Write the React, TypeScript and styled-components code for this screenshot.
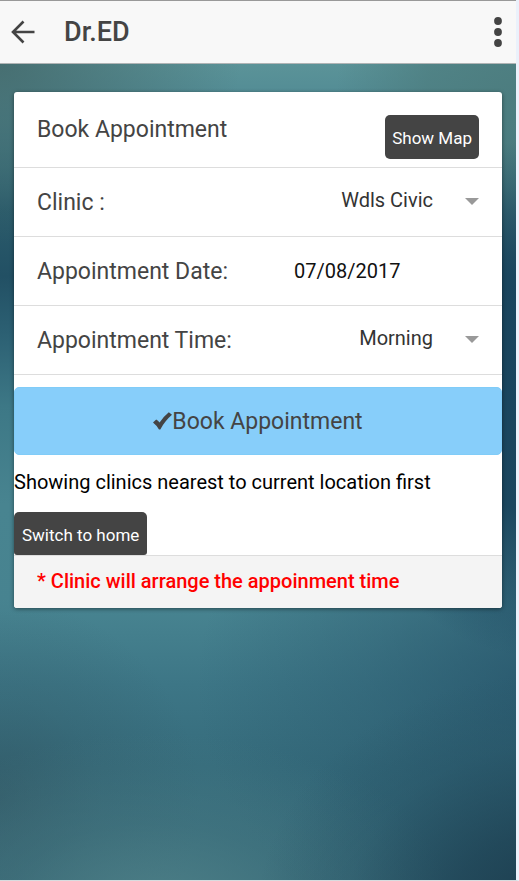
import React, { useState } from "react";
import styled, { createGlobalStyle } from "styled-components";

const GlobalStyle = createGlobalStyle`
  *, *::before, *::after { box-sizing: border-box; }
  body { margin: 0; background: #ebf1fb; }
  button, input, select { font: inherit; color: inherit; margin: 0; }
`;

const Screen = styled.div`
  min-height: 100vh;
  display: flex;
  flex-direction: column;
  border-right: 3px solid #ebf1fb;
  border-bottom: 1px solid #d8dcdf;
  font-family: Roboto, "Liberation Sans", sans-serif;
  font-size: 20px;
  line-height: 28px;
  color: #000;
`;

const TopBar = styled.header`
  display: flex;
  align-items: center;
  height: 64px;
  padding: 0 8px 0 10px;
  background: #f8f8f8;
  border-top: 1px solid #999;
  border-bottom: 1px solid #b0b4b5;
  color: #444;
`;

const IconButton = styled.button`
  display: flex;
  padding: 0;
  border: 0;
  background: none;
  cursor: pointer;
`;

const Title = styled.h1`
  flex: 1;
  margin: 0 0 0 28px;
  font-size: 27px;
  line-height: 32px;
  font-weight: 500;
`;

const Content = styled.main`
  flex: 1;
  padding: 28px 14px;
  background:
    radial-gradient(ellipse 300px 240px at 108% 104%, #1b3b4c 0%, rgba(29, 64, 82, 0.75) 35%, rgba(34, 74, 92, 0.3) 70%, rgba(34, 74, 92, 0) 100%),
    radial-gradient(ellipse 300px 180px at 30% 104%, rgba(80, 130, 137, 0.9) 0%, rgba(74, 124, 132, 0.4) 50%, rgba(74, 124, 132, 0) 100%),
    radial-gradient(ellipse 200px 200px at 0% 90%, rgba(50, 86, 98, 0.65) 0%, rgba(50, 86, 98, 0.25) 50%, rgba(50, 86, 98, 0) 100%),
    radial-gradient(ellipse 220px 260px at 106% 41%, #19445d 0%, rgba(25, 68, 93, 0.95) 45%, rgba(25, 68, 93, 0) 100%),
    radial-gradient(ellipse 240px 180px at 0% 0%, rgba(66, 102, 104, 0.8) 0%, rgba(66, 102, 104, 0) 100%),
    radial-gradient(ellipse 180px 180px at 100% 4%, rgba(76, 124, 126, 0.95) 0%, rgba(76, 124, 126, 0.7) 50%, rgba(76, 124, 126, 0) 100%),
    radial-gradient(ellipse 340px 280px at 104% 76%, rgba(38, 84, 106, 0.8) 0%, rgba(38, 84, 106, 0.35) 50%, rgba(38, 84, 106, 0) 100%),
    linear-gradient(180deg, #5b9398 0%, #508a94 5%, #3f7580 11%, #2a5b6b 18%, #225064 26%, #2c6073 33%, #3d7886 42%, #488490 54%, #478390 67%, #3d7686 76%, #366c7c 86%, #376a79 100%);
`;

const Card = styled.section`
  display: flex;
  flex-direction: column;
  overflow: hidden;
  border-radius: 3px;
  background: #fff;
  box-shadow: 0 1px 4px rgba(0, 0, 0, 0.45);
`;

const Row = styled.div`
  display: flex;
  align-items: center;
  justify-content: space-between;
  height: 69px;
  padding: 1px 23px 0;
  border-bottom: 1px solid #ddd;
  font-size: 23px;
  color: #444;
`;

const HeadRow = styled(Row)`
  align-items: flex-start;
  height: 76px;
  padding-top: 23px;
`;

const Heading = styled.h2`
  margin: 0;
  font-size: 23px;
  line-height: 30px;
  font-weight: 400;
`;

const DarkButton = styled.button<{ $attached?: boolean }>`
  height: ${(p) => (p.$attached ? "43px" : "44px")};
  padding: ${(p) => (p.$attached ? "2px 8px 0" : "1px 7px 0")};
  border: 0;
  border-radius: ${(p) => (p.$attached ? "5px 5px 3px 3px" : "5px")};
  background: #444;
  color: #fff;
  font-size: 17px;
  line-height: 24px;
  cursor: pointer;
`;

const SelectWrap = styled.div`
  display: flex;
  align-items: center;
  padding-bottom: 5px;
  position: relative;

  &::after {
    content: "";
    position: absolute;
    right: 0;
    top: 12px;
    border: 7px solid transparent;
    border-top-color: #999;
    border-bottom-width: 0;
    pointer-events: none;
  }
`;

const Select = styled.select`
  appearance: none;
  width: 180px;
  padding: 0 46px 0 0;
  border: 0;
  background: none;
  color: #333;
  font-size: 20px;
  line-height: 28px;
  text-align: right;
  text-align-last: right;
`;

const DateInput = styled.input`
  width: 185px;
  padding: 0 0 2px;
  border: 0;
  background: none;
  color: #111;
  font-size: 20px;
  line-height: 28px;
`;

const BookButton = styled.button`
  display: flex;
  align-items: center;
  justify-content: center;
  height: 68px;
  margin-top: 12px;
  padding: 2px 0 0;
  border: 1px solid #80ccf8;
  border-radius: 5px;
  background: #87cefa;
  color: #444;
  font-size: 23px;
  cursor: pointer;

  svg { margin-bottom: 2px; }
`;

const Notice = styled.p`
  margin: 13px 0 16px;
`;

const Actions = styled.div`
  display: flex;
`;

const CardFooter = styled.footer`
  height: 53px;
  padding: 11px 23px 0;
  border-top: 1px solid #ddd;
  background: #f4f4f4;
  color: #f00;
  font-weight: 500;
`;

const BackIcon = () => (
  <svg width="26" height="26" viewBox="0 0 26 26" fill="none" stroke="#444" strokeWidth="2.6" aria-hidden="true">
    <path d="M24.5 13H3.500M13.500 2.500L3 13L13.500 23.500" />
  </svg>
);

const MoreIcon = () => (
  <svg width="20" height="30" viewBox="0 0 20 30" fill="#444" aria-hidden="true">
    <circle cx="10" cy="4" r="3.900" />
    <circle cx="10" cy="15" r="3.900" />
    <circle cx="10" cy="26" r="3.900" />
  </svg>
);

const CheckIcon = () => (
  <svg width="19" height="18" viewBox="0 0 19 18" fill="#444" aria-hidden="true">
    <path d="M0 10.500L3.200 7.500Q5 8.700 6.600 10.600Q10.800 4.300 15.800 0.300L19 2.800Q12 8.800 7.300 17.400H6Q3.800 13.600 0 10.500Z" />
  </svg>
);

export default function App() {
  const [date, setDate] = useState("07/08/2017");
  return (
    <>
      <GlobalStyle />
      <Screen>
        <TopBar>
          <IconButton type="button" aria-label="Back"><BackIcon /></IconButton>
          <Title>Dr.ED</Title>
          <IconButton type="button" aria-label="More options"><MoreIcon /></IconButton>
        </TopBar>
        <Content>
          <Card>
            <HeadRow>
              <Heading>Book Appointment</Heading>
              <DarkButton type="button">Show Map</DarkButton>
            </HeadRow>
            <Row>
              <label htmlFor="clinic">Clinic :</label>
              <SelectWrap>
                <Select id="clinic" defaultValue="Wdls Civic">
                  <option>Wdls Civic</option>
                </Select>
              </SelectWrap>
            </Row>
            <Row>
              <label htmlFor="date">Appointment Date:</label>
              <DateInput id="date" type="text" value={date} onChange={(e) => setDate(e.target.value)} />
            </Row>
            <Row>
              <label htmlFor="time">Appointment Time:</label>
              <SelectWrap>
                <Select id="time" defaultValue="Morning">
                  <option>Morning</option>
                </Select>
              </SelectWrap>
            </Row>
            <BookButton type="button"><CheckIcon />Book Appointment</BookButton>
            <Notice>Showing clinics nearest to current location first</Notice>
            <Actions>
              <DarkButton type="button" $attached>Switch to home</DarkButton>
            </Actions>
            <CardFooter>* Clinic will arrange the appoinment time</CardFooter>
          </Card>
        </Content>
      </Screen>
    </>
  );
}
